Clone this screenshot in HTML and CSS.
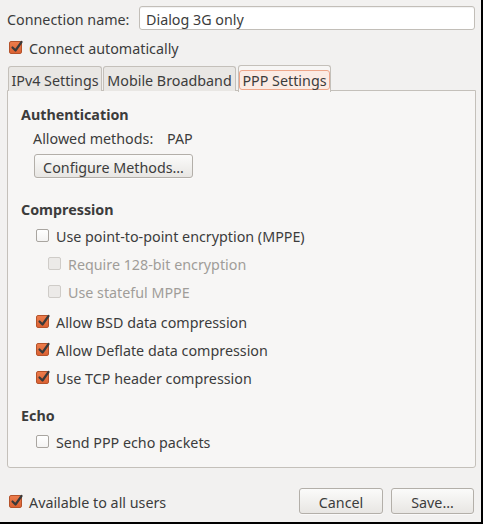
FILE: index.html
```html
<!DOCTYPE html>
<html>
<head>
<meta charset="utf-8">
<link rel="stylesheet" href="styles.css">
</head>
<body>
<div class="window">
  <div class="name-row">
    <span class="name-label">Connection name:</span>
    <div class="entry">Dialog 3G only</div>
  </div>
  <div class="check top-check">
    <span class="box checked"><svg viewBox="0 0 15 15" width="15" height="15"><path d="M3.5 7.5 L6.5 10.5 L12.5 2" fill="none" stroke="#3a3a3a" stroke-width="2.2" stroke-linecap="round" stroke-linejoin="round"/></svg></span>
    <span class="lbl">Connect automatically</span>
  </div>
  <div class="notebook">
    <div class="tabs">
      <div class="tab tab-ipv4">IPv4 Settings</div>
      <div class="tab tab-mobile">Mobile Broadband</div>
      <div class="tab tab-ppp active"><span class="focus">PPP Settings</span></div>
    </div>
    <div class="page">
      <div class="heading">Authentication</div>
      <div class="methods"><span class="methods-label">Allowed methods:</span><span class="methods-value">PAP</span></div>
      <div class="btn configure">Configure Methods…</div>
      <div class="heading compression">Compression</div>
      <div class="check row mppe"><span class="box"></span><span class="lbl">Use point-to-point encryption (MPPE)</span></div>
      <div class="check row sub disabled"><span class="box"></span><span class="lbl">Require 128-bit encryption</span></div>
      <div class="check row sub disabled"><span class="box"></span><span class="lbl">Use stateful MPPE</span></div>
      <div class="check row bsd"><span class="box checked"><svg viewBox="0 0 15 15" width="15" height="15"><path d="M3.5 7.5 L6.5 10.5 L12.5 2" fill="none" stroke="#3a3a3a" stroke-width="2.2" stroke-linecap="round" stroke-linejoin="round"/></svg></span><span class="lbl">Allow BSD data compression</span></div>
      <div class="check row"><span class="box checked"><svg viewBox="0 0 15 15" width="15" height="15"><path d="M3.5 7.5 L6.5 10.5 L12.5 2" fill="none" stroke="#3a3a3a" stroke-width="2.2" stroke-linecap="round" stroke-linejoin="round"/></svg></span><span class="lbl">Allow Deflate data compression</span></div>
      <div class="check row"><span class="box checked"><svg viewBox="0 0 15 15" width="15" height="15"><path d="M3.5 7.5 L6.5 10.5 L12.5 2" fill="none" stroke="#3a3a3a" stroke-width="2.2" stroke-linecap="round" stroke-linejoin="round"/></svg></span><span class="lbl">Use TCP header compression</span></div>
      <div class="heading echo">Echo</div>
      <div class="check row echo-row"><span class="box"></span><span class="lbl">Send PPP echo packets</span></div>
    </div>
  </div>
  <div class="footer">
    <div class="check bottom-check">
      <span class="box checked"><svg viewBox="0 0 15 15" width="15" height="15"><path d="M3.5 7.5 L6.5 10.5 L12.5 2" fill="none" stroke="#3a3a3a" stroke-width="2.2" stroke-linecap="round" stroke-linejoin="round"/></svg></span>
      <span class="lbl">Available to all users</span>
    </div>
    <div class="buttons">
      <div class="btn cancel">Cancel</div>
      <div class="btn save">Save…</div>
    </div>
  </div>
</div>
</body>
</html>
```
FILE: styles.css
```css
* { box-sizing: border-box; }
html, body { margin: 0; padding: 0; background: #000; }
body {
  font-family: "Noto Sans", "DejaVu Sans", sans-serif;
  font-size: 14.3px;
  color: #3c3c3c;
}
.window {
  width: 483px;
  height: 524px;
  background: #f2f1f0;
  border-right: 2px solid #000;
  border-bottom: 2px solid #000;
  display: flex;
  flex-direction: column;
  padding: 0 5px 0 7px;
}
.name-row {
  margin-top: 6px;
  height: 24px;
  display: flex;
  align-items: center;
}
.name-label { width: 132px; padding-top: 2px; }
.entry {
  flex: 1;
  height: 24px;
  background: #fff;
  border: 1px solid #c2beb8;
  border-radius: 3px;
  padding: 2px 6px 0;
  display: flex;
  align-items: center;
  margin-right: 1px;
  box-shadow: inset 0 1px 1px rgba(0,0,0,0.06);
}
.check {
  display: flex;
  align-items: center;
}
.box {
  width: 13px;
  height: 13px;
  border: 1px solid #a9a5a0;
  border-radius: 2px;
  background: linear-gradient(#ffffff, #f4f3f2);
  position: relative;
  flex: none;
  margin-top: 1px;
}
.box.checked {
  background: linear-gradient(#ec7c4b, #dc6233);
  border-color: #b5532b;
}
.box svg {
  position: absolute;
  left: -1px;
  top: -2px;
}
.lbl { margin-left: 7px; padding-top: 2px; }
.top-check {
  margin-top: 8px;
  height: 18px;
  padding-left: 2px;
}
.notebook {
  margin-top: 9px;
  display: flex;
  flex-direction: column;
}
.tabs {
  height: 26px;
  display: flex;
  align-items: flex-start;
  position: relative;
  z-index: 1;
  margin-bottom: -1px;
}
.tab {
  margin-top: 1px;
  height: 25px;
  padding-top: 2px;
  background: #e9e7e4;
  border: 1px solid #c4c0ba;
  border-bottom: none;
  border-radius: 3px 3px 0 0;
  display: flex;
  align-items: center;
  justify-content: center;
}
.tab-ipv4 { width: 94px; margin-left: 1px; }
.tab-mobile { width: 133px; margin-left: 1px; }
.tab-ppp { width: 93px; margin-left: 2px; }
.tab.active {
  margin-top: 0;
  height: 27px;
  padding-top: 0;
  background: #f7f6f5;
  border-color: #c4c0ba;
}
.focus {
  border: 1px solid #eea68a;
  background: #fbebe4;
  border-radius: 3px;
  padding: 2px 2px 0;
  height: 20px;
  display: flex;
  align-items: center;
  margin-top: 1px;
}
.page {
  height: 378px;
  background: #f7f6f5;
  border: 1px solid #c4c0ba;
  border-radius: 0 0 3px 3px;
  padding: 12px 0 11px 13px;
  display: flex;
  flex-direction: column;
}
.heading {
  height: 20px;
  padding-top: 2px;
  display: flex;
  align-items: center;
  font-weight: bold;
}
.methods {
  margin-top: 4px;
  height: 20px;
  padding-top: 2px;
  display: flex;
  align-items: center;
  padding-left: 12px;
}
.methods-label { width: 134px; }
.btn {
  height: 24px;
  padding-top: 2px;
  border: 1px solid #b3afa9;
  border-radius: 3px;
  background: linear-gradient(#fbfbfa, #e8e6e3);
  display: flex;
  align-items: center;
  justify-content: center;
  box-shadow: 0 1px 0 rgba(255,255,255,0.6);
}
.configure {
  margin-top: 7px;
  margin-left: 13px;
  width: 159px;
}
.compression { margin-top: 20px; }
.row {
  height: 28px;
  padding-left: 15px;
}
.mppe { margin-top: 3px; }
.row.sub { padding-left: 27px; }
.disabled { color: #a09d99; }
.disabled .box {
  background: #eceae8;
  border-color: #cfccc8;
}
.bsd { margin-top: 2px; }
.echo { margin-top: 13px; }
.echo-row { margin-top: 3px; }
.footer {
  margin-top: 20px;
  height: 26px;
  display: flex;
  align-items: center;
  justify-content: space-between;
}
.bottom-check { padding-left: 2px; }
.buttons {
  display: flex;
  gap: 8px;
  margin-right: 2px;
}
.btn.cancel { width: 84px; height: 26px; }
.btn.save { width: 83px; height: 26px; }
```
